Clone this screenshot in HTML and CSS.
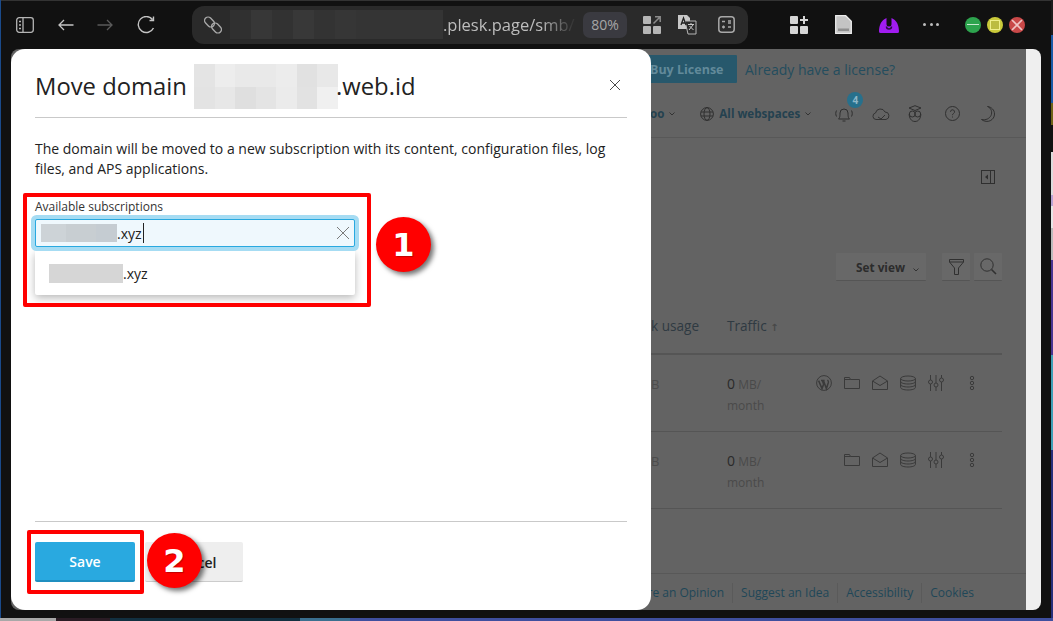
FILE: index.html
```html
<!DOCTYPE html>
<html lang="en">
<head>
<meta charset="utf-8">
<title>Move domain</title>
<link rel="stylesheet" href="styles.css">
</head>
<body>
<svg class="defs" width="0" height="0" aria-hidden="true">
  <symbol id="i-wp" viewBox="0 0 16 16"><circle cx="8" cy="8" r="7.4" fill="none" stroke="currentColor"/><path d="M2.6 5.6 6 13.6l1.6-4.4-1.1-3.2M5 5.6h3.6M7.4 5.6l3 8 2-6.2c.3-1.100-.4-2-1-2.400" fill="none" stroke="currentColor" stroke-width="1.500"/></symbol>
  <symbol id="i-folder" viewBox="0 0 16 16"><path d="M.5 13.500V2.500h5l1 2h9v9z" fill="none" stroke="currentColor"/><path d="M.5 4.500h6" stroke="currentColor" fill="none"/></symbol>
  <symbol id="i-mail" viewBox="0 0 16 16"><path d="M.5 6 8 1l7.500 5v8.500H.5zM.5 6 8 10.500 15.500 6" fill="none" stroke="currentColor"/></symbol>
  <symbol id="i-db" viewBox="0 0 16 16"><ellipse cx="8" cy="3.500" rx="7.400" ry="2.500" fill="none" stroke="currentColor"/><path d="M.6 3.500v9c0 1.400 3.300 2.500 7.400 2.500s7.400-1.100 7.400-2.500v-9M.6 6.500C.6 7.900 3.900 9 8 9s7.400-1.100 7.400-2.500M.6 9.500c0 1.400 3.300 2.500 7.400 2.500s7.400-1.100 7.400-2.500" fill="none" stroke="currentColor"/></symbol>
  <symbol id="i-sliders" viewBox="0 0 16 16"><path d="M2.500 0v5M2.500 9v7M8 0v8M8 12v4M13.500 0v3M13.500 7v9" stroke="currentColor" fill="none"/><circle cx="2.500" cy="7" r="2" fill="none" stroke="currentColor"/><circle cx="8" cy="10" r="2" fill="none" stroke="currentColor"/><circle cx="13.500" cy="5" r="2" fill="none" stroke="currentColor"/></symbol>
  <symbol id="i-dots" viewBox="0 0 6 16"><circle cx="3" cy="3" r="1.700" fill="none" stroke="currentColor"/><circle cx="3" cy="8" r="1.700" fill="none" stroke="currentColor"/><circle cx="3" cy="13" r="1.700" fill="none" stroke="currentColor"/></symbol>
</svg>

<div class="desktop">
  <div class="window">
    <header class="chrome">
      <div class="chrome-left">
        <svg class="ic" width="18" height="16" viewBox="0 0 18 16"><rect x=".7" y=".7" width="16.600" height="14.600" rx="2.500" fill="none" stroke="#b5b5b5" stroke-width="1.300"/><path d="M7 1v14" stroke="#b5b5b5" stroke-width="1.300"/><path d="M3 4.500h2M3 8h2M3 11.500h2" stroke="#b5b5b5" stroke-width="1.500"/></svg>
        <svg class="ic" width="16" height="12" viewBox="0 0 16 12"><path d="M15.500 6H1M6 1 1 6l5 5" fill="none" stroke="#c4c4c4" stroke-width="1.300"/></svg>
        <svg class="ic" width="16" height="12" viewBox="0 0 16 12"><path d="M.5 6H15M10 1l5 5-5 5" fill="none" stroke="#5a5a5a" stroke-width="1.300"/></svg>
        <svg class="ic" width="19" height="18" viewBox="0 0 19 18"><path d="M16.500 12a8 8 0 1 1-1-8.500M16.500 .5v4h-4" fill="none" stroke="#c4c4c4" stroke-width="1.400"/></svg>
      </div>
      <div class="address">
        <svg class="ic" width="18" height="18" viewBox="0 0 18 18"><g fill="none" stroke="#a8a8a8" stroke-width="1.400"><rect x="0" y="2.500" width="11" height="7" rx="3.500" transform="rotate(45 5.500 6)"/><rect x="7" y="8.500" width="11" height="7" rx="3.500" transform="rotate(45 12.500 12)"/></g></svg>
        <span class="url-mask"></span>
        <span class="url-text">.plesk.page/smb/</span>
        <span class="zoom-pill">80%</span>
        <svg class="ic" width="18" height="18" viewBox="0 0 18 18"><g fill="#b5b5b5"><rect width="8" height="8" rx="1"/><rect y="10" width="8" height="8" rx="1"/><rect x="10" y="10" width="8" height="8" rx="1"/></g><path d="M10.500 7.500 17 1M12 .8h5.200V6" fill="none" stroke="#8a8a8a" stroke-width="1.500"/></svg>
        <svg class="ic tr" width="20" height="20" viewBox="0 0 20 20"><path d="M1 0h9l3 3v11H1z" fill="#c8c8c8"/><path d="M8 6h11v13H11z" fill="#2b2b2b" stroke="#b5b5b5"/><path d="m4 10 2.500-7L9 10M5 8h3" fill="none" stroke="#222" stroke-width="1.300"/><path d="M11 9.500h6M14 8v2M12 15l4-5M12.500 11l4 4" fill="none" stroke="#c8c8c8"/></svg>
        <svg class="ic" width="17" height="17" viewBox="0 0 17 17"><rect x=".8" y=".8" width="15.400" height="15.400" rx="3" fill="none" stroke="#a8a8a8" stroke-width="1.500"/><path d="M4 5.500h3M10 5h3M10 7h3M4 11h3M5.500 9.500v3M10 11h3" stroke="#a8a8a8" stroke-width="1.300" fill="none"/></svg>
      </div>
      <div class="chrome-right">
        <svg class="ic" width="18" height="18" viewBox="0 0 18 18"><g fill="#d6d6d6"><rect width="8" height="8" rx="1"/><rect y="10" width="8" height="8" rx="1"/><rect x="10" y="10" width="8" height="8" rx="1"/><path d="M13 0h2v3h3v2h-3v3h-2V5h-3V3h3z"/></g></svg>
        <svg class="ic" width="17" height="19" viewBox="0 0 17 19"><path d="M.7.7h10l5.600 5.600v12H.7z" fill="#c4c4c4" stroke="#ececec" stroke-width="1.300"/><path d="M3 13.500h11v2.500H3z" fill="#8f8f8f"/></svg>
        <svg class="ic" width="20" height="16" viewBox="0 0 20 16"><path d="M0 14.500C0 8 2.500 3 7.500 1v6a2.500 2.500 0 0 0 5 0V1C17.500 3 20 8 20 14.500q0 1.500-1.500 1.500h-17Q0 16 0 14.500z" fill="#a11cf0"/><path d="M7.500 9.500a2.500 2.500 0 0 0 5 0" fill="none" stroke="#2a1040" stroke-width="1.500"/></svg>
        <span class="dots3"><i></i><i></i><i></i></span>
        <div class="lights">
          <span class="light green"><b></b></span>
          <span class="light yellow"><b></b></span>
          <span class="light red"><svg width="16" height="16" viewBox="0 0 16 16"><path d="m3 3 10 10M13 3 3 13" stroke="#f0c4c4" stroke-width="1.700"/></svg></span>
        </div>
      </div>
    </header>

    <div class="content">
      <div class="page">
        <main class="main">
          <div class="strip">
            <span class="buy">Buy License</span>
            <span class="already">Already have a license?</span>
          </div>
          <div class="nav">
            <span class="nav-text">oo</span>
            <svg class="chev" width="6" height="4" viewBox="0 0 6 4"><path d="m.5.500 2.500 2.500L5.500.500" fill="none" stroke="#333" /></svg>
            <svg class="ic globe" width="14" height="14" viewBox="0 0 14 14"><g fill="none" stroke="#303030"><circle cx="7" cy="7" r="6.400"/><ellipse cx="7" cy="7" rx="3" ry="6.400"/><path d="M1 5h12M1 9h12"/></g></svg>
            <span class="nav-text">All webspaces</span>
            <svg class="chev" width="6" height="4" viewBox="0 0 6 4"><path d="m.5.500 2.500 2.500L5.500.500" fill="none" stroke="#333"/></svg>
            <span class="bell-wrap">
              <svg class="ic" width="18" height="16" viewBox="0 0 18 16"><path d="M3.500 13c1-1 1.500-2 1.500-6a4 4 0 0 1 8 0c0 4 .5 5 1.500 6zM7.500 15h3M1.500 4.500c-1 2-1 4 0 6M16.500 4.500c1 2 1 4 0 6" fill="none" stroke="#2f2f2f"/></svg>
              <span class="count">4</span>
            </span>
            <svg class="ic cloud" width="18" height="12" viewBox="0 0 18 12"><path d="M4 11.500a3.300 3.300 0 0 1-.5-6.500A5 5 0 0 1 13 4a3.800 3.800 0 0 1 1 7.500zM6 9l3 2 4-4" fill="none" stroke="#333"/></svg>
            <svg class="ic owl" width="14" height="17" viewBox="0 0 14 17"><g fill="none" stroke="#303030"><path d="M1 3 7 .7 13 3 7 5.500z"/><circle cx="4.300" cy="9" r="3"/><circle cx="9.700" cy="9" r="3"/><path d="M1.200 9c0 4 2 7.500 5.800 7.500S12.800 13 12.800 9"/></g></svg>
            <svg class="ic help" width="15" height="15" viewBox="0 0 15 15"><circle cx="7.500" cy="7.500" r="7" fill="none" stroke="#303030"/><path d="M5.500 5.800a2 2 0 1 1 3 1.700c-.7.400-1 .8-1 1.700" fill="none" stroke="#303030"/><path d="M7 10.500h1v1H7z" fill="#303030"/></svg>
            <svg class="ic moon" width="14" height="16" viewBox="0 0 14 16"><path d="M6.500.5c4 1.500 5 6 3.500 9S5 14.500.5 13.500c6 4.500 13 .5 13-5.500 0-4-3-7-7-7.500z" fill="none" stroke="#303030"/></svg>
          </div>
          <div class="panel-row">
            <svg width="14" height="14" viewBox="0 0 14 14"><rect x=".5" y=".5" width="13" height="13" fill="none" stroke="#2f2f2f"/><path d="M9.500 1v12" stroke="#2f2f2f"/><path d="M7 4.500v5L4 7z" fill="#2f2f2f"/></svg>
          </div>
          <div class="tools">
            <span class="btn-view">Set view <svg class="chev" width="6" height="4" viewBox="0 0 6 4"><path d="m.5.500 2.500 2.500L5.500.500" fill="none" stroke="#333"/></svg></span>
            <span class="btn-icon"><svg width="15" height="16" viewBox="0 0 15 16"><path d="M.5.500h14v2.500l-5 6v6.500h-4V9l-5-6zM.5 3h14" fill="none" stroke="#303030"/></svg></span>
            <span class="btn-icon"><svg width="17" height="17" viewBox="0 0 17 17"><circle cx="7" cy="7" r="6.200" fill="none" stroke="#303030"/><path d="m11.500 11.500 4.500 4.500" stroke="#303030" stroke-width="1.600"/></svg></span>
          </div>
          <div class="grid-row head">
            <span class="col-a">k usage</span>
            <span class="col-b">Traffic <small>↑</small></span>
          </div>
          <div class="grid-row item">
            <span class="col-a dim">B</span>
            <span class="col-b traffic"><b>0</b> MB/<br>month</span>
            <span class="actions">
              <svg class="act"><use href="#i-wp"/></svg>
              <svg class="act"><use href="#i-folder"/></svg>
              <svg class="act"><use href="#i-mail"/></svg>
              <svg class="act"><use href="#i-db"/></svg>
              <svg class="act"><use href="#i-sliders"/></svg>
              <svg class="more"><use href="#i-dots"/></svg>
            </span>
          </div>
          <div class="grid-row item">
            <span class="col-a dim">B</span>
            <span class="col-b traffic"><b>0</b> MB/<br>month</span>
            <span class="actions">
              <svg class="act ghost"></svg>
              <svg class="act"><use href="#i-folder"/></svg>
              <svg class="act"><use href="#i-mail"/></svg>
              <svg class="act"><use href="#i-db"/></svg>
              <svg class="act"><use href="#i-sliders"/></svg>
              <svg class="more"><use href="#i-dots"/></svg>
            </span>
          </div>
          <div class="spacer"></div>
          <footer class="foot">
            <span>Share an Opinion</span>
            <span>Suggest an Idea</span>
            <span>Accessibility</span>
            <span>Cookies</span>
          </footer>
        </main>
        <div class="scrollbar"></div>
      </div>

      <section class="modal">
        <div class="modal-head">
          <h1>Move domain <span class="mosaic-title"></span>.web.id</h1>
          <svg class="close" width="12" height="12" viewBox="0 0 12 12"><path d="m1 1 10 10M11 1 1 11" stroke="#4a4a4a"/></svg>
        </div>
        <p class="lead">The domain will be moved to a new subscription with its content, configuration files, log files, and APS applications.</p>
        <label class="field-label">Available subscriptions</label>
        <div class="input">
          <span class="mask-input"></span><span>.xyz</span><span class="caret"></span>
          <svg class="clear" width="12" height="12" viewBox="0 0 12 12"><path d="m0 0 12 12M12 0 0 12" stroke="#7a7a7a"/></svg>
        </div>
        <div class="dropdown"><span class="mask-option"></span><span>.xyz</span></div>
        <div class="modal-spacer"></div>
        <div class="modal-foot">
          <button class="save" type="button">Save</button>
          <button class="cancel" type="button">Cancel</button>
        </div>
      </section>
    </div>
  </div>
</div>

<div class="mark mark-a"></div>
<div class="mark mark-b"></div>
<div class="step step-a">1</div>
<div class="step step-b">2</div>
</body>
</html>
```

FILE: styles.css
```css
* { box-sizing: border-box; }
html, body { margin: 0; padding: 0; }
body {
  width: 1053px;
  height: 621px;
  overflow: hidden;
  position: relative;
  font-family: "Open Sans", "Noto Sans", sans-serif;
  color: #222;
}
.defs { position: absolute; }
.desktop {
  width: 100%;
  height: 100%;
  padding: 0 2px 3px 1px;
  background:
    linear-gradient(90deg, #a8a8a8 0 56px, #2a1c24 56px 110px, #123040 110px 300px, #3a6f8f 300px 350px, #3f4f9f 350px 100%) bottom / 100% 3px no-repeat,
    linear-gradient(180deg, #1c1c1c 0 35px, #1a5aa5 35px 103px, #6f6418 103px 125px, #111 125px 152px, #dcdcdc 152px 195px, #b9a4d4 195px 206px, #e6e6e6 206px 228px, #bbb 228px 260px, #4a3590 260px 355px, #3f9fb5 355px 450px, #27307a 450px 100%) right / 2px 100% no-repeat,
    #1a4a8a;
}
.window {
  height: 100%;
  background: #111;
  border-top: 1px solid #333;
  display: flex;
  flex-direction: column;
}

/* browser chrome */
.chrome {
  height: 48px;
  flex: none;
  display: flex;
  align-items: center;
  padding-bottom: 1px;
}
.ic { display: block; flex: none; }
.chrome-left {
  width: 191px;
  display: flex;
  align-items: center;
  padding-left: 15px;
  gap: 23.500px;
}
.address {
  width: 556px;
  height: 38px;
  border-radius: 12px;
  background: #2a2a2a;
  display: flex;
  align-items: center;
  padding-left: 12px;
}
.url-mask {
  width: 213px;
  height: 29px;
  margin-left: 8px;
  background: linear-gradient(90deg, #303030 0 21px, #373737 21px 42px, #323232 42px 63px, #383838 63px 84px, #333 84px 105px, #363636 105px 126px, #343434 126px 100%);
}
.url-text {
  width: 140px;
  font-size: 16.500px;
  color: #bdbdbd;
  white-space: nowrap;
  overflow: hidden;
  -webkit-mask-image: linear-gradient(90deg, #000 70%, rgba(0, 0, 0, .1) 92%);
  mask-image: linear-gradient(90deg, #000 70%, rgba(0, 0, 0, .1) 92%);
}
.zoom-pill {
  width: 44px;
  height: 26px;
  border-radius: 7px;
  background: #3a3a40;
  color: #a6a6a6;
  font-size: 14px;
  line-height: 26px;
  text-align: center;
  margin-right: 16px;
}
.address .tr { margin: 0 21px 0 16px; }
.chrome-right {
  display: flex;
  align-items: center;
  padding-left: 42px;
  flex: 1;
}
.chrome-right > .ic:nth-child(2) { margin-left: 27px; }
.chrome-right > .ic:nth-child(3) { margin-left: 27px; }
.dots3 { display: flex; gap: 3.500px; margin-left: 24px; }
.dots3 i { width: 3px; height: 3px; border-radius: 50%; background: #bdbdbd; display: block; }
.lights { display: flex; gap: 6px; margin-left: 26px; }
.light {
  width: 16px;
  height: 16px;
  border-radius: 50%;
  display: flex;
  align-items: center;
  justify-content: center;
}
.green { background: #2da44e; }
.green b { width: 12px; height: 1.500px; background: #c8e8d0; display: block; }
.yellow { background: #c9c93a; }
.yellow b { width: 10px; height: 10px; border: 1px solid #eeee8a; background: #bcbc40; display: block; }
.red { background: #c94848; }

/* page under the dialog */
.content {
  flex: 1;
  margin: 0 10px 8px 10px;
  position: relative;
  border-radius: 8px;
  overflow: hidden;
}
.page { height: 100%; display: flex; }
.main {
  flex: 1;
  background: #636363;
  display: flex;
  flex-direction: column;
  color: #2f3a42;
}
.scrollbar { width: 15px; background: #efefef; }
.strip {
  height: 40px;
  padding: 6px 0 0 629px;
  display: flex;
  align-items: flex-start;
  flex: none;
}
.buy {
  width: 97px;
  height: 28px;
  background: #27586c;
  border-radius: 1px;
  color: #628a9a;
  font-size: 12.500px;
  font-weight: 700;
  line-height: 30px;
  padding-left: 10px;
}
.already {
  color: #244d5e;
  font-size: 14px;
  line-height: 30px;
  margin-left: 8px;
}
.nav {
  height: 49px;
  flex: none;
  border-bottom: 1px solid #585858;
  padding: 1px 0 0 639px;
  display: flex;
  align-items: center;
}
.nav-text { font-size: 11.600px; font-weight: 700; color: #24414f; }
.chev { margin-left: 5px; }
.globe { margin: 0 5px 0 25px; }
.bell-wrap { position: relative; margin-left: 24px; }
.count {
  position: absolute;
  left: 12px;
  top: -14px;
  width: 16px;
  height: 16px;
  border-radius: 50%;
  background: #27708c;
  color: #8fb6c6;
  font-size: 10px;
  font-weight: 700;
  line-height: 16px;
  text-align: center;
}
.cloud { margin-left: 19px; }
.owl { margin-left: 18px; }
.help { margin-left: 23px; }
.moon { margin-left: 21px; }
.panel-row {
  height: 115px;
  flex: none;
  padding: 32px 31px 0 0;
  display: flex;
  justify-content: flex-end;
}
.tools {
  height: 28px;
  flex: none;
  padding-right: 24px;
  display: flex;
  justify-content: flex-end;
  gap: 4px;
}
.btn-view {
  width: 90px;
  margin-right: 12px;
  height: 28px;
  background: #686868;
  border-bottom: 1px solid #555;
  border-radius: 1px;
  color: #2c2c2c;
  font-size: 11.800px;
  font-weight: 700;
  padding-left: 20px;
  line-height: 29px;
}
.btn-icon {
  width: 28px;
  height: 28px;
  background: #686868;
  border-bottom: 1px solid #555;
  border-radius: 1px;
  display: flex;
  align-items: center;
  justify-content: center;
}
.grid-row {
  margin-right: 24px;
  padding-left: 640px;
  display: grid;
  grid-template-columns: 76px 88px 1fr;
  flex: none;
}
.head {
  height: 74px;
  border-bottom: 2px solid #555;
  padding-top: 35px;
  font-size: 13.600px;
}
.head small { font-family: "DejaVu Sans", sans-serif; font-size: 10px; font-weight: 700; color: #484848; }
.item {
  height: 77px;
  border-bottom: 1px solid #555;
  padding-top: 17px;
  color: #4a4a4a;
  font-size: 13px;
}
.col-a { grid-column: 1; white-space: nowrap; }
.dim { color: #4c4c4c; padding-top: 3px; }
.col-b { grid-column: 2; }
.traffic { font-size: 12px; line-height: 21px; padding-top: 1px; }
.traffic b { font-weight: 400; font-size: 14px; color: #2a2a2a; }
.actions { display: flex; color: #3a3a3a; padding-top: 3px; height: 22px; }
.act { width: 16px; height: 16px; margin-left: 1px; margin-right: 11px; flex: none; }
.act.ghost { visibility: hidden; }
.more { width: 6px; height: 16px; margin: 0 0 0 14px; flex: none; color: #3a3a3a; }
.spacer { flex: 1; }
.foot {
  height: 37px;
  flex: none;
  border-top: 1px solid #585858;
  display: flex;
  justify-content: flex-end;
  align-items: center;
  padding: 1px 52px 0 0;
  color: #1f4758;
  font-size: 12px;
}
.foot span { padding: 0 8px; border-left: 1px solid #5a5a5a; line-height: 20px; }
.foot span:first-child { border-left: 0; }
.foot span:last-child { padding-right: 0; }

/* dialog */
.modal {
  position: absolute;
  left: 0;
  top: 0;
  width: 640px;
  height: 100%;
  background: #fff;
  border-radius: 14px;
  padding: 0 24px 28px;
  display: flex;
  flex-direction: column;
}
.modal-head {
  height: 69px;
  border-bottom: 1px solid #c9c9c9;
  position: relative;
  flex: none;
}
h1 {
  margin: 0;
  padding-top: 15px;
  font-size: 23.800px;
  line-height: 44px;
  font-weight: 400;
  color: #222;
  display: flex;
  align-items: flex-start;
  white-space: pre;
}
.mosaic-title {
  width: 144px;
  height: 45px;
  margin: 0 -2px 0 1px;
  background:
    linear-gradient(90deg, #e4e4e4 0 21px, #ededed 21px 41px, #e9e9e9 41px 82px, #ececec 82px 103px, #e1e1e1 103px 123px, #e8e8e8 123px 100%) top / 100% 23px no-repeat,
    linear-gradient(90deg, #e3e3e3 0 21px, #e7e7e7 21px 41px, #dfdfdf 41px 62px, #e4e4e4 62px 82px, #ebebeb 82px 103px, #e2e2e2 103px 123px, #f0f0f0 123px 100%);
}
.close { position: absolute; right: 6px; top: 30px; }
.lead {
  margin: 21px 0 0;
  font-size: 14px;
  line-height: 20px;
  color: #222;
}
.field-label {
  display: block;
  margin-top: 20px;
  font-size: 12px;
  line-height: 16px;
  color: #333;
}
.input {
  width: 320px;
  height: 28px;
  margin-top: 4px;
  border: 1px solid #29a9e0;
  border-radius: 2px;
  box-shadow: 0 0 0 4px #a6dcf3;
  background: #eff8fd;
  display: flex;
  align-items: center;
  padding-left: 5px;
  font-size: 14px;
  position: relative;
}
.mask-input {
  width: 76px;
  height: 18px;
  background: linear-gradient(90deg, #cdd3d7 0 25px, #c8ced2 25px 55px, #c5ccd2 55px 100%);
}
.caret { width: 1px; height: 20px; background: #222; margin-left: 1px; }
.clear { position: absolute; right: 5px; top: 7px; }
.dropdown {
  width: 320px;
  height: 44px;
  margin-top: 4px;
  background: #fff;
  box-shadow: 0 3px 8px rgba(0, 0, 0, .28);
  border-radius: 0 0 2px 2px;
  display: flex;
  align-items: center;
  padding-left: 14px;
  font-size: 14px;
  flex: none;
}
.mask-option { width: 74px; height: 19px; background: #d6d6d6; }
.modal-spacer { flex: 1; }
.modal-foot {
  border-top: 1px solid #c9c9c9;
  padding-top: 20px;
  display: flex;
  gap: 10px;
  flex: none;
}
.modal-foot button {
  height: 40px;
  border: 0;
  padding: 1px 0 0;
  border-radius: 2px;
  font-family: inherit;
  font-size: 14px;
  font-weight: 600;
}
.save {
  width: 100px;
  background: #29a9e0;
  border-bottom: 2px solid #1f8fc0 !important;
  color: #fff;
}
.cancel {
  width: 98px;
  background: #eee;
  border-bottom: 1px solid #ccc !important;
  color: #222;
}

/* tutorial annotations */
.mark {
  position: absolute;
  border: 4px solid #f00;
  border-radius: 2px;
}
.mark-a { left: 23px; top: 193px; width: 348px; height: 114px; }
.mark-b { left: 27px; top: 530px; width: 117px; height: 64px; }
.step {
  position: absolute;
  width: 55px;
  height: 55px;
  border-radius: 50%;
  background: #f00;
  color: #fff;
  font-family: "DejaVu Sans", sans-serif;
  font-size: 32px;
  font-weight: 700;
  line-height: 57px;
  text-align: center;
  box-shadow: 3px 3px 5px rgba(0, 0, 0, .55);
  text-shadow: 1px 1px 1px rgba(0, 0, 0, .25);
}
.step-a { left: 376px; top: 217px; }
.step-b { left: 147px; top: 533px; }
```
